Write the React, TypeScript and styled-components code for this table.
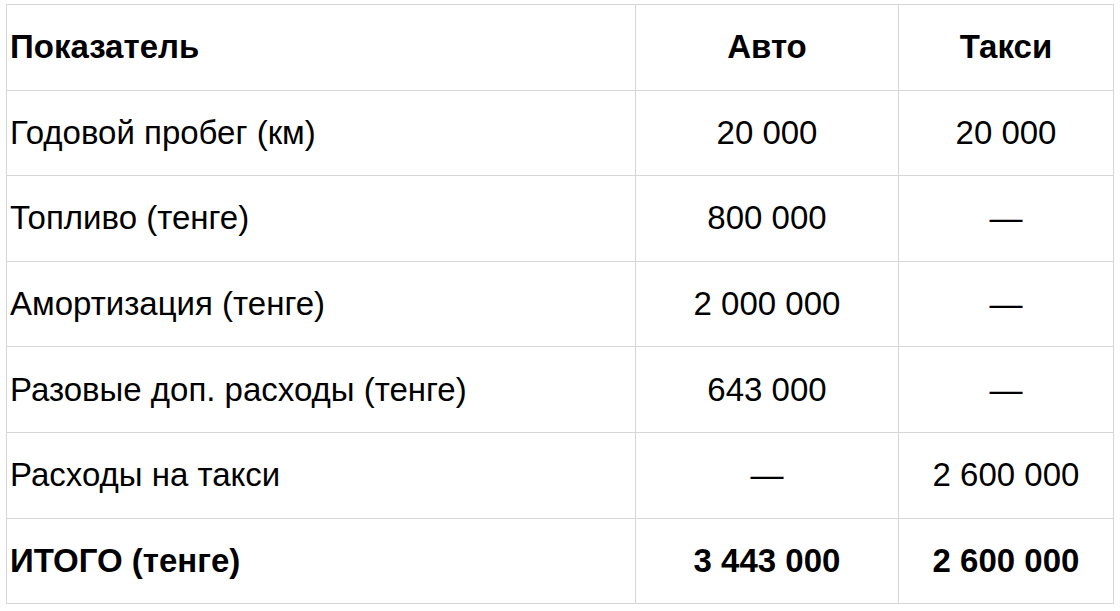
import React from 'react'
import styled, { createGlobalStyle } from 'styled-components'

const GlobalStyle = createGlobalStyle`
  html, body {
    margin: 0;
    padding: 0;
    background: #fff;
  }
  body {
    font-family: "Liberation Sans", Arial, sans-serif;
    color: #000;
  }
`

const Page = styled.div`
  padding: 4px 0 0 6px;
`

const Table = styled.table`
  border-collapse: collapse;
  table-layout: fixed;
  width: 1107px;
`

const Row = styled.tr`
  height: 85.6px;
`

const Cell = styled.td<{ $align?: 'left' | 'center'; $bold?: boolean }>`
  border: 1px solid #d6d6d6;
  padding: 0 0 0 ${(p) => (p.$align === 'center' ? '0' : '3px')};
  font-size: 33px;
  font-weight: ${(p) => (p.$bold ? 700 : 400)};
  text-align: ${(p) => p.$align || 'left'};
  vertical-align: middle;
  white-space: nowrap;
  color: #000;
`

const HeadCell = styled(Cell).attrs({ as: 'th' })``

interface Line {
  label: string
  auto: string
  taxi: string
}

const rows: Line[] = [
  { label: 'Годовой пробег (км)', auto: '20 000', taxi: '20 000' },
  { label: 'Топливо (тенге)', auto: '800 000', taxi: '—' },
  { label: 'Амортизация (тенге)', auto: '2 000 000', taxi: '—' },
  { label: 'Разовые доп. расходы (тенге)', auto: '643 000', taxi: '—' },
  { label: 'Расходы на такси', auto: '—', taxi: '2 600 000' },
]

const App: React.FC = () => {
  return (
    <>
      <GlobalStyle />
      <Page>
        <Table>
          <colgroup>
            <col style={{ width: 629 }} />
            <col style={{ width: 263 }} />
            <col style={{ width: 215 }} />
          </colgroup>
          <thead>
            <Row>
              <HeadCell $bold>Показатель</HeadCell>
              <HeadCell $bold $align="center">Авто</HeadCell>
              <HeadCell $bold $align="center">Такси</HeadCell>
            </Row>
          </thead>
          <tbody>
            {rows.map((r) => (
              <Row key={r.label}>
                <Cell>{r.label}</Cell>
                <Cell $align="center">{r.auto}</Cell>
                <Cell $align="center">{r.taxi}</Cell>
              </Row>
            ))}
            <Row>
              <Cell $bold>ИТОГО (тенге)</Cell>
              <Cell $bold $align="center">3 443 000</Cell>
              <Cell $bold $align="center">2 600 000</Cell>
            </Row>
          </tbody>
        </Table>
      </Page>
    </>
  )
}

export default App
